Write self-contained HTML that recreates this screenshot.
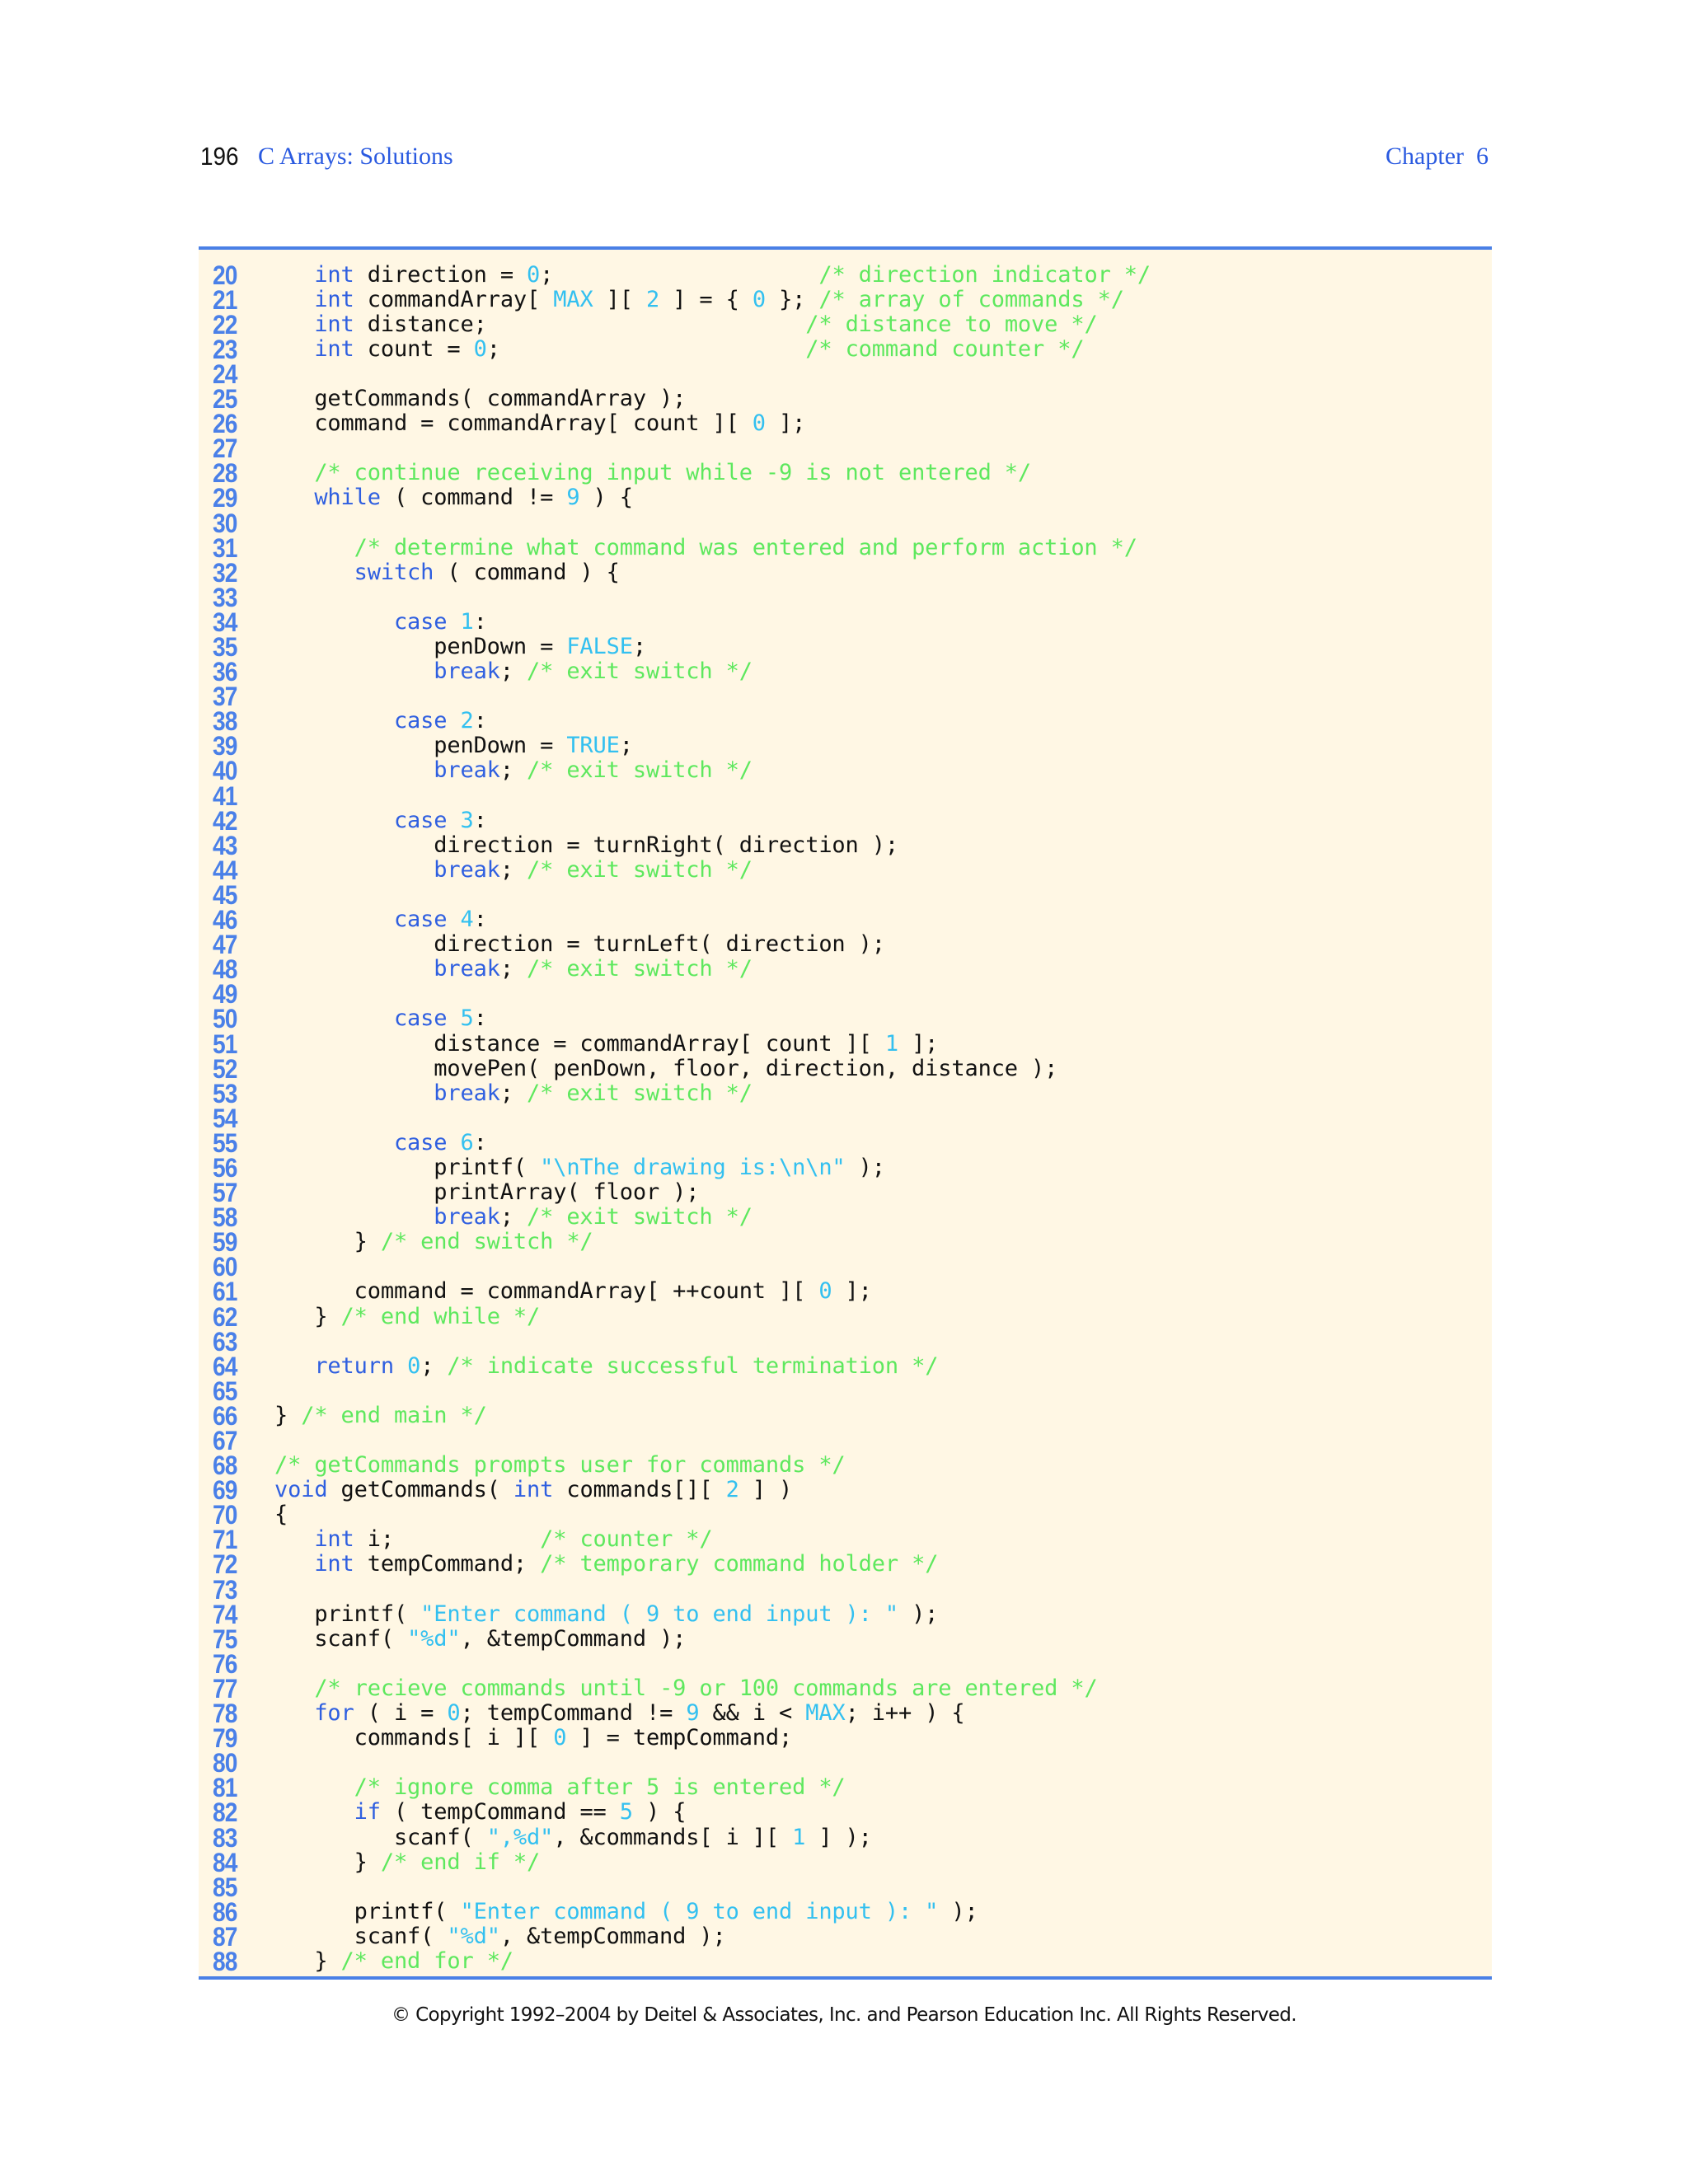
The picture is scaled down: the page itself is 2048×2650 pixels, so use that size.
<!DOCTYPE html>
<html><head><meta charset="utf-8"><style>
html,body{margin:0;padding:0;background:#fff;}
body{width:2048px;height:2650px;position:relative;overflow:hidden;}
.hdr{position:absolute;top:170px;font-size:30px;line-height:40px;}
#pg{left:243px;font-family:"Liberation Sans",sans-serif;color:#111;font-size:31px;transform:scaleX(0.9);transform-origin:left;}
#tt{left:313px;font-family:"Liberation Serif",serif;color:#2a5ae0;}
#ch{right:242px;font-family:"Liberation Serif",serif;color:#2a5ae0;}
#box{position:absolute;left:241px;top:299px;width:1569px;height:2103px;background:#fff7e4;border-top:4px solid #4a80e6;border-bottom:4px solid #4a80e6;box-sizing:border-box;}
#ln{position:absolute;left:258px;top:318.6px;font-family:"Liberation Sans",sans-serif;font-weight:bold;font-size:32px;line-height:30.1px;color:#4a80e8;white-space:pre;letter-spacing:-1px;transform:scaleX(0.88);transform-origin:left;}
#code{position:absolute;left:333px;top:318.6px;font-family:"DejaVu Sans Mono","Liberation Mono",monospace;font-size:27px;line-height:30.1px;color:#111;white-space:pre;margin:0;letter-spacing:-0.15px;}
.k{color:#2f5fe0}.n{color:#33c0f0}.c{color:#5ee85e}
#cp{position:absolute;left:0;width:2048px;text-align:center;top:2432px;font-family:"DejaVu Sans","Liberation Sans",sans-serif;font-size:23px;color:#111;letter-spacing:-0.6px;}
</style></head><body>
<div class="hdr" id="pg">196</div>
<div class="hdr" id="tt">C Arrays: Solutions</div>
<div class="hdr" id="ch">Chapter&nbsp;&nbsp;6</div>
<div id="box"></div>
<div id="ln">20
21
22
23
24
25
26
27
28
29
30
31
32
33
34
35
36
37
38
39
40
41
42
43
44
45
46
47
48
49
50
51
52
53
54
55
56
57
58
59
60
61
62
63
64
65
66
67
68
69
70
71
72
73
74
75
76
77
78
79
80
81
82
83
84
85
86
87
88</div>
<pre id="code">   <span class="k">int</span> direction = <span class="n">0</span>;                    <span class="c">/* direction indicator */</span>
   <span class="k">int</span> commandArray[ <span class="n">MAX</span> ][ <span class="n">2</span> ] = { <span class="n">0</span> }; <span class="c">/* array of commands */</span>
   <span class="k">int</span> distance;                        <span class="c">/* distance to move */</span>
   <span class="k">int</span> count = <span class="n">0</span>;                       <span class="c">/* command counter */</span>

   getCommands( commandArray );
   command = commandArray[ count ][ <span class="n">0</span> ];

   <span class="c">/* continue receiving input while -9 is not entered */</span>
   <span class="k">while</span> ( command != <span class="n">9</span> ) {

      <span class="c">/* determine what command was entered and perform action */</span>
      <span class="k">switch</span> ( command ) {

         <span class="k">case</span> <span class="n">1</span>:
            penDown = <span class="n">FALSE</span>;
            <span class="k">break</span>; <span class="c">/* exit switch */</span>

         <span class="k">case</span> <span class="n">2</span>:
            penDown = <span class="n">TRUE</span>;
            <span class="k">break</span>; <span class="c">/* exit switch */</span>

         <span class="k">case</span> <span class="n">3</span>:
            direction = turnRight( direction );
            <span class="k">break</span>; <span class="c">/* exit switch */</span>

         <span class="k">case</span> <span class="n">4</span>:
            direction = turnLeft( direction );
            <span class="k">break</span>; <span class="c">/* exit switch */</span>

         <span class="k">case</span> <span class="n">5</span>:
            distance = commandArray[ count ][ <span class="n">1</span> ];
            movePen( penDown, floor, direction, distance );
            <span class="k">break</span>; <span class="c">/* exit switch */</span>

         <span class="k">case</span> <span class="n">6</span>:
            printf( <span class="n">"\nThe drawing is:\n\n"</span> );
            printArray( floor );
            <span class="k">break</span>; <span class="c">/* exit switch */</span>
      } <span class="c">/* end switch */</span>

      command = commandArray[ ++count ][ <span class="n">0</span> ];
   } <span class="c">/* end while */</span>

   <span class="k">return</span> <span class="n">0</span>; <span class="c">/* indicate successful termination */</span>

} <span class="c">/* end main */</span>

<span class="c">/* getCommands prompts user for commands */</span>
<span class="k">void</span> getCommands( <span class="k">int</span> commands[][ <span class="n">2</span> ] )
{
   <span class="k">int</span> i;           <span class="c">/* counter */</span>
   <span class="k">int</span> tempCommand; <span class="c">/* temporary command holder */</span>

   printf( <span class="n">"Enter command ( 9 to end input ): "</span> );
   scanf( <span class="n">"%d"</span>, &amp;tempCommand );

   <span class="c">/* recieve commands until -9 or 100 commands are entered */</span>
   <span class="k">for</span> ( i = <span class="n">0</span>; tempCommand != <span class="n">9</span> &amp;&amp; i &lt; <span class="n">MAX</span>; i++ ) {
      commands[ i ][ <span class="n">0</span> ] = tempCommand;

      <span class="c">/* ignore comma after 5 is entered */</span>
      <span class="k">if</span> ( tempCommand == <span class="n">5</span> ) {
         scanf( <span class="n">",%d"</span>, &amp;commands[ i ][ <span class="n">1</span> ] );
      } <span class="c">/* end if */</span>

      printf( <span class="n">"Enter command ( 9 to end input ): "</span> );
      scanf( <span class="n">"%d"</span>, &amp;tempCommand );
   } <span class="c">/* end for */</span></pre>
<div id="cp">© Copyright 1992–2004 by Deitel &amp; Associates, Inc. and Pearson Education Inc. All Rights Reserved.</div>
</body></html>
